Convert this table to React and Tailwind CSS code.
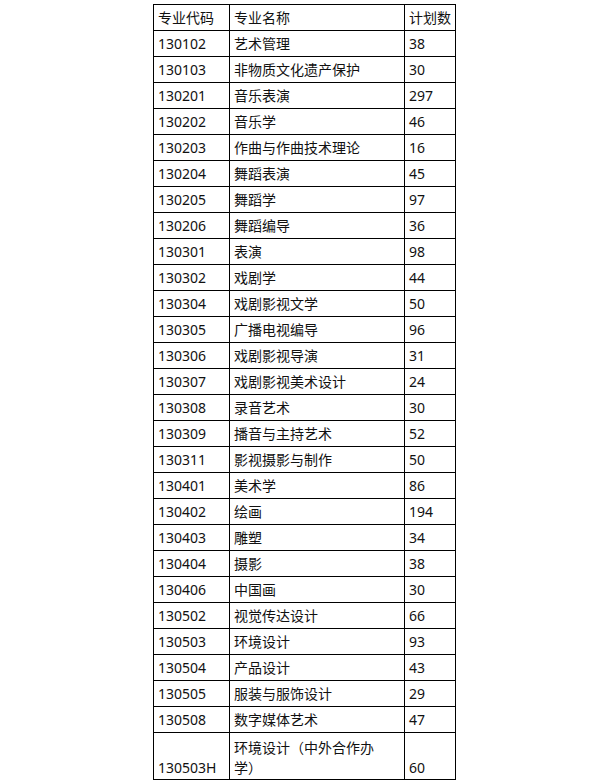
const rows = [
  ['130102', '艺术管理', '38'],
  ['130103', '非物质文化遗产保护', '30'],
  ['130201', '音乐表演', '297'],
  ['130202', '音乐学', '46'],
  ['130203', '作曲与作曲技术理论', '16'],
  ['130204', '舞蹈表演', '45'],
  ['130205', '舞蹈学', '97'],
  ['130206', '舞蹈编导', '36'],
  ['130301', '表演', '98'],
  ['130302', '戏剧学', '44'],
  ['130304', '戏剧影视文学', '50'],
  ['130305', '广播电视编导', '96'],
  ['130306', '戏剧影视导演', '31'],
  ['130307', '戏剧影视美术设计', '24'],
  ['130308', '录音艺术', '30'],
  ['130309', '播音与主持艺术', '52'],
  ['130311', '影视摄影与制作', '50'],
  ['130401', '美术学', '86'],
  ['130402', '绘画', '194'],
  ['130403', '雕塑', '34'],
  ['130404', '摄影', '38'],
  ['130406', '中国画', '30'],
  ['130502', '视觉传达设计', '66'],
  ['130503', '环境设计', '93'],
  ['130504', '产品设计', '43'],
  ['130505', '服装与服饰设计', '29'],
  ['130508', '数字媒体艺术', '47'],
]

const cell = 'border border-black px-[4px] align-middle leading-[20px]'

export default function App() {
  return (
    <div className="bg-white min-h-screen pl-[153px] pt-[4px] text-[14px] text-[#111]"
      style={{ fontFamily: '"Noto Sans", "Noto Sans CJK SC", sans-serif' }}>
      <table className="border-collapse table-fixed w-[302px]">
        <colgroup>
          <col className="w-[76px]" />
          <col className="w-[175px]" />
          <col className="w-[51px]" />
        </colgroup>
        <tbody>
          <tr className="h-[26px]">
            <td className={cell}>专业代码</td>
            <td className={cell}>专业名称</td>
            <td className={cell}>计划数</td>
          </tr>
          {rows.map(([code, name, n]) => (
            <tr key={code} className="h-[26px]">
              <td className={cell}>{code}</td>
              <td className={cell}>{name}</td>
              <td className={cell}>{n}</td>
            </tr>
          ))}
          <tr className="h-[47px]">
            <td className={cell + ' !align-bottom pb-[1px]'}>130503H</td>
            <td className={cell + ' !align-bottom pb-[1px]'}>
              <div className="w-[150px]">环境设计（中外合作办学）</div>
            </td>
            <td className={cell + ' !align-bottom pb-[1px]'}>60</td>
          </tr>
        </tbody>
      </table>
    </div>
  )
}
